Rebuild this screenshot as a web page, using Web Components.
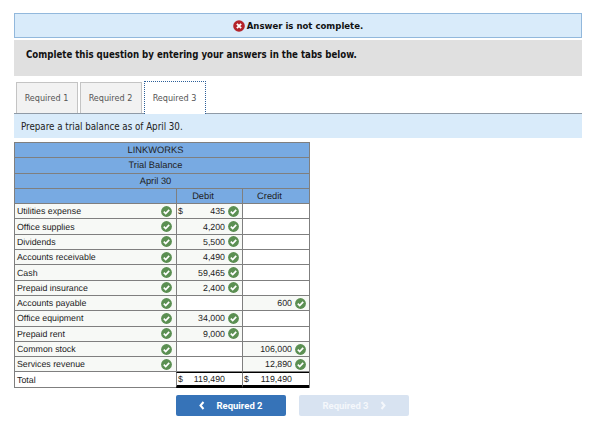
<!DOCTYPE html>
<html><head><meta charset="utf-8"><title>Trial balance</title>
<style>
html,body{margin:0;background:#fff}
body{width:609px;height:439px;overflow:hidden;font-family:"DejaVu Sans",sans-serif;color:#111}
</style></head><body>
<quiz-page></quiz-page>
<script>
const CHECK='<svg width="11" height="11" viewBox="0 0 11 11" style="display:block;flex:none"><circle cx="5.5" cy="5.5" r="5.4" fill="#5b8f52"/><path d="M2.8 5.7l1.9 1.9 3.5-3.8" fill="none" stroke="#fff" stroke-width="1.7"/></svg>';
const VF='"DejaVu Sans Condensed","DejaVu Sans",sans-serif';
class AlertBanner extends HTMLElement{constructor(){super();this.attachShadow({mode:'open'}).innerHTML=`<style>
:host{display:flex;align-items:center;justify-content:center;gap:2px;height:23px;background:#d9ebfa;border:1px solid #92b8dc;font:bold 9.5px ${VF};color:#111}
svg{display:block}</style>
<svg width="12" height="12" viewBox="0 0 12 12"><circle cx="6" cy="6" r="5.8" fill="#b4232a"/><path d="M3.9 3.9l4.2 4.2M8.1 3.9l-4.2 4.2" stroke="#fff" stroke-width="1.9"/></svg><slot></slot>`}}
class InstructionBar extends HTMLElement{constructor(){super();this.attachShadow({mode:'open'}).innerHTML=`<style>
:host{display:block;height:36px;box-sizing:border-box;padding:8px 12px 0;margin-top:2px;background:#e0e0e0;font:bold 9.6px/14px ${VF};color:#111}</style><slot></slot>`}}
class TabStrip extends HTMLElement{constructor(){super();this.attachShadow({mode:'open'}).innerHTML=`<style>
:host{display:flex;gap:2px;height:32px;margin-top:5px;padding-left:2px;border-bottom:1px solid #8f9aa6;font:9px ${VF};color:#555}
</style><slot></slot>`}}
class TabItem extends HTMLElement{constructor(){super();this.attachShadow({mode:'open'}).innerHTML=`<style>
:host{display:flex;align-items:center;justify-content:center;box-sizing:border-box;width:62px;height:31px;margin-top:1px;padding:0 1px 1px 0;background:#f2f2f2;border:1px solid #c4c4c4;border-bottom:0}
:host([active]){background:#fff;border:1px dotted #2c5f99;border-bottom:0;height:33px;margin-top:0;margin-bottom:-1px;position:relative}
</style><slot></slot>`}}
class PromptBar extends HTMLElement{constructor(){super();this.attachShadow({mode:'open'}).innerHTML=`<style>
:host{display:block;height:24px;padding:0 7px;background:#d9ebfa;font:9.7px/25px ${VF};color:#222}</style><slot></slot>`}}
class StatusCheck extends HTMLElement{constructor(){super();this.attachShadow({mode:'open'}).innerHTML=`<style>:host{display:block;flex:none;width:11px;height:11px}</style>${CHECK}`}}
class TrialBalance extends HTMLElement{constructor(){super();
const rows=[['Utilities expense','435','',1],['Office supplies','4,200',''],['Dividends','5,500',''],['Accounts receivable','4,490',''],['Cash','59,465',''],['Prepaid insurance','2,400',''],['Accounts payable','','600'],['Office equipment','34,000',''],['Prepaid rent','9,000',''],['Common stock','','106,000'],['Services revenue','','12,890']];
const ck='<status-check></status-check>';
const num=(v,s)=>v?`<div class="c num">${s?'<span class="dl">$</span>':''}<span>${v}</span>${ck}</div>`:`<div class="c wh"></div>`;
const body=rows.map(([n,d,c,s])=>`<div class="c name"><span>${n}</span>${ck}</div>${num(d,s)}${num(c)}`).join('');
this.attachShadow({mode:'open'}).innerHTML=`<style>
:host{display:grid;grid-template-columns:161px 66px 67px;grid-auto-rows:15.3px;width:296px;margin-top:4px;border:1px solid #7f7f7f;border-width:1px 1px 0 1px;box-sizing:border-box;font:8.8px "Liberation Sans",sans-serif;color:#222;text-rendering:geometricPrecision}
.c{display:flex;align-items:center;border-bottom:1px solid #7f7f7f;border-left:1px solid #7f7f7f;box-sizing:border-box;min-width:0;padding:0 2px;background:#f7f9f6}
.name{border-left:0;justify-content:space-between;padding-right:4px;padding-left:2px}
.num{justify-content:flex-end;gap:3px;position:relative;padding-right:3px}
.dl{position:absolute;left:1px}
.wh{background:#fff}
.hd{background:#78aae2;color:#222;justify-content:center;font-size:9.3px;padding-right:15px}
.t{grid-column:1/4;border-left:0}
.first{border-left:0}
.tot{background:#fff;position:relative}
.sum{justify-content:flex-end;padding-right:17px;border-top:1px solid #000;border-bottom:3px solid #000;background:#fff;position:relative}
</style>
<div class="c hd t">LINKWORKS</div><div class="c hd t">Trial Balance</div><div class="c hd t">April 30</div>
<div class="c hd first"></div><div class="c hd">Debit</div><div class="c hd">Credit</div>
${body}
<div class="c name tot">Total</div>
<div class="c sum"><span class="dl">$</span>119,490</div>
<div class="c sum"><span class="dl">$</span>119,490</div>`}}
class NavButton extends HTMLElement{constructor(){super();this.attachShadow({mode:'open'}).innerHTML=`<style>
:host{display:flex;align-items:center;justify-content:center;gap:11px;width:110px;height:21px;background:#3673b8;border-radius:2px;font:bold 9.5px Roboto,sans-serif;color:#fff}
:host([disabled]){background:#d8e3f1;color:#f4f7fb}
svg{display:block}</style><slot name="l"></slot><slot></slot><slot name="r"></slot>`}}
class QuizPage extends HTMLElement{constructor(){super();
const ch=(d,s)=>`<svg slot="${s}" width="6" height="9" viewBox="0 0 6 9" style="display:block"><path d="${d}" fill="none" stroke="currentColor" stroke-width="2"/></svg>`;
this.attachShadow({mode:'open'}).innerHTML=`<style>
:host{display:block;padding:13px 27px 0 14px;width:568px}
.nav{display:flex;gap:13px;margin:7px 0 0 162px}
</style>
<alert-banner>Answer is not complete.</alert-banner>
<instruction-bar>Complete this question by entering your answers in the tabs below.</instruction-bar>
<tab-strip><tab-item>Required 1</tab-item><tab-item>Required 2</tab-item><tab-item active>Required 3</tab-item></tab-strip>
<prompt-bar>Prepare a trial balance as of April 30.</prompt-bar>
<trial-balance></trial-balance>
<div class="nav"><nav-button>${ch('M4.5 1L1.5 4.5l3 3.5','l')}Required 2</nav-button><nav-button disabled>Required 3${ch('M1.5 1l3 3.5-3 3.5','r')}</nav-button></div>`}}
[['status-check',StatusCheck],['alert-banner',AlertBanner],['instruction-bar',InstructionBar],['tab-strip',TabStrip],['tab-item',TabItem],['prompt-bar',PromptBar],['trial-balance',TrialBalance],['nav-button',NavButton],['quiz-page',QuizPage]].forEach(([n,c])=>customElements.define(n,c));
</script></body></html>
